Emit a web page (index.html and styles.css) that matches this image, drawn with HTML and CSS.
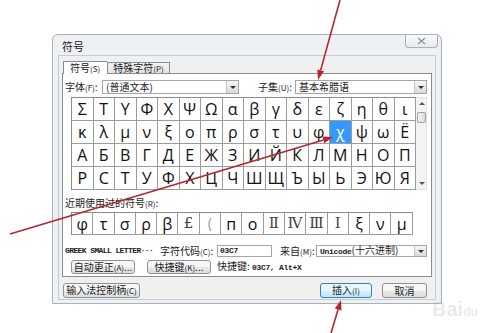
FILE: index.html
```html
<!DOCTYPE html>
<html lang="zh-CN">
<head>
<meta charset="UTF-8" />
<meta name="viewport" content="width=device-width, initial-scale=1" />
<title>符号</title>
<link rel="stylesheet" href="styles.css">
</head>
<body>
  <div class="dialog">
    <div class="titlebar">
      <span class="title">符号</span>
      <span class="close">
        <svg width="9" height="8" viewBox="0 0 9 8"><path d="M1 1 L8 7 M8 1 L1 7" stroke="#8a929a" stroke-width="1.3" fill="none"/></svg>
      </span>
    </div>

    <div class="client">
      <div class="tabs">
        <div class="tab active">符号<span class="key">(S)</span></div>
        <div class="tab">特殊字符<span class="key">(P)</span></div>
      </div>

      <div class="panel">
        <div class="font-row">
          <label class="lbl-font">字体<span class="key">(F)</span>:</label>
          <div class="select sel-font"><span>(普通文本)</span><i class="drop"></i></div>
          <label class="lbl-subset">子集<span class="key">(U)</span>:</label>
          <div class="select sel-subset"><span>基本希腊语</span><i class="drop"></i></div>
        </div>

        <div class="chars">
          <div class="grid">
            <div>Σ</div><div>Τ</div><div>Υ</div><div>Φ</div><div>Χ</div><div>Ψ</div><div>Ω</div><div>α</div>
            <div>β</div><div>γ</div><div>δ</div><div>ε</div><div>ζ</div><div>η</div><div>θ</div><div>ι</div>
            <div>κ</div><div>λ</div><div>μ</div><div>ν</div><div>ξ</div><div>ο</div><div>π</div><div>ρ</div>
            <div>σ</div><div>τ</div><div>υ</div><div>φ</div><div class="sel">χ</div><div>ψ</div><div>ω</div><div>Ё</div>
            <div>А</div><div>Б</div><div>В</div><div>Г</div><div>Д</div><div>Е</div><div>Ж</div><div>З</div>
            <div>И</div><div>Й</div><div>К</div><div>Л</div><div>М</div><div>Н</div><div>О</div><div>П</div>
            <div>Р</div><div>С</div><div>Т</div><div>У</div><div>Ф</div><div>Х</div><div>Ц</div><div>Ч</div>
            <div>Ш</div><div>Щ</div><div>Ъ</div><div>Ы</div><div>Ь</div><div>Э</div><div>Ю</div><div>Я</div>
          </div>
          <div class="scroll">
            <span class="arr up"></span>
            <span class="thumb"></span>
            <span class="arr down"></span>
          </div>
        </div>

        <div class="recent-label">近期使用过的符号<span class="key">(R)</span>:</div>
        <div class="grid recent">
          <div>φ</div><div>τ</div><div>σ</div><div>ρ</div><div>β</div><div class="serif">£</div><div class="thin">(</div><div>п</div>
          <div>o</div><div class="serif">Ⅱ</div><div class="serif">Ⅳ</div><div class="serif">Ⅲ</div><div class="serif">Ⅰ</div><div>ξ</div><div>ν</div><div>μ</div>
        </div>

        <div class="info-row">
          <span class="charname">GREEK SMALL LETTER···</span>
          <label class="lbl-code">字符代码<span class="key">(C)</span>:</label>
          <div class="input"><span class="mono">03C7</span></div>
          <label class="lbl-from">来自<span class="key">(M)</span>:</label>
          <div class="select sel-from"><span><span class="mono">Unicode</span>(十六进制)</span><i class="drop"></i></div>
        </div>

        <div class="btn-row">
          <button class="btn b-auto">自动更正<span class="key">(A)</span>...</button>
          <button class="btn b-keys">快捷键<span class="key">(K)</span>...</button>
          <span class="shortcut">快捷键: <span class="mono">03C7, Alt+X</span></span>
        </div>
      </div>

      <div class="footer">
        <button class="btn b-ime">输入法控制柄<span class="key">(C)</span></button>
        <button class="btn b-insert">插入<span class="key">(I)</span></button>
        <button class="btn b-cancel">取消</button>
      </div>
    </div>
  </div>

  <div class="watermark">Bai<span>du</span></div>

  <svg class="arrows" width="500" height="333" viewBox="0 0 500 333">
    <g stroke="#b5262f" stroke-width="1.6" fill="none">
      <line x1="340" y1="0" x2="320.6" y2="70.4"/>
      <line x1="10" y1="234" x2="323.4" y2="139.9"/>
      <line x1="331" y1="333" x2="338.1" y2="309.6"/>
    </g>
    <g fill="#b5262f">
      <polygon points="318,80 324,71.3 317.3,69.4"/>
      <polygon points="333,137 324.4,143.3 322.4,136.5"/>
      <polygon points="341,300 341.5,310.6 334.8,308.6"/>
    </g>
  </svg>
</body>
</html>
```

FILE: styles.css
```css
* {
  margin: 0; padding: 0; box-sizing: border-box;
}
body {
  width: 500px;
  height: 333px;
  overflow: hidden;
  position: relative;
  background: #fff;
  font-family: "Noto Sans CJK SC", sans-serif;
  font-size: 10px;
  line-height: 12px;
  color: #222;
}
label,
.shortcut,
.recent-label {
  white-space: nowrap;
  flex-shrink: 0;
}
.key {
  font-size: 8px;
}
.mono {
  font-family: "Liberation Mono", monospace;
  font-size: 8px;
  font-weight: bold;
  letter-spacing: -0.3px;
}
/* окно */
.dialog {
  margin: 34px 0 0 52px;
  width: 390px;
  height: 270px;
  border: 1px solid #a9b0b8;
  border-radius: 6px 6px 0 0;
  background: #eef1f4;
  padding: 0 5px 3px;
  display: flex;
  flex-direction: column;
}
.titlebar {
  height: 20px;
  display: flex;
  justify-content: space-between;
}
.title {
  padding: 5px 0 0 4px;
  font-size: 11px;
}
.close {
  width: 33px;
  height: 13px;
  border: 1px solid #a9b0b8;
  border-top: none;
  border-radius: 0 0 4px 4px;
  background: linear-gradient(#fbfbfc, #e6e9ed);
  display: flex;
  align-items: center;
  justify-content: center;
  margin-right: -2px;
}
.client {
  flex: 1;
  background: #f0f0f0;
  border: 1px solid #c5cbd2;
  padding: 5px 3px 1px;
  display: flex;
  flex-direction: column;
}
/* вкладки */
.tabs {
  display: flex;
  height: 12px;
  padding-left: 1px;
  align-items: flex-end;
}
.tab {
  height: 11px;
  padding: 0 5px;
  border: 1px solid #898c95;
  border-bottom: none;
  background: linear-gradient(#f4f4f4, #e2e2e2);
  font-size: 10px;
  line-height: 10px;
  white-space: nowrap;
}
.tab.active {
  height: 13px;
  margin-bottom: -1px;
  background: #fff;
  position: relative;
  z-index: 1;
  padding: 1px 7px 0 6px;
  border-right: none;
}
.panel {
  height: 204px;
  border: 1px solid #898c95;
  background: #fff;
  padding: 6px 4px 3px 2px;
}
.font-row,
.info-row,
.btn-row {
  display: flex;
  align-items: center;
}
.font-row {
  height: 14px;
}
.lbl-font { width: 37px; }
.lbl-subset { width: 37px; margin-left: 19px; }
.select {
  height: 14px;
  border: 1px solid #a5a5a5;
  background: #fff;
  display: flex;
  align-items: center;
  padding-left: 3px;
  white-space: nowrap;
}
.select span { flex: 1; }
.drop {
  width: 12px;
  height: 12px;
  border-left: 1px solid #c4c4c4;
  background: linear-gradient(#f6f6f6, #dadada);
  position: relative;
}
.drop::after {
  content: "";
  position: absolute;
  left: 3px; top: 5px;
  border: 3px solid transparent;
  border-top: 3px solid #333;
  border-bottom: none;
}
.sel-font { width: 137px; }
.sel-subset { width: 132px; }
/* таблица символов */
.chars {
  display: flex;
  margin: 3px 0 0 6px;
}
.grid {
  display: grid;
  grid-template-columns: repeat(16, 21.5px);
  border-top: 1px solid #8c8c8c;
  border-left: 1px solid #8c8c8c;
}
.grid div {
  height: 23px;
  border-right: 1px solid #9c9c9c;
  border-bottom: 1px solid #9c9c9c;
  display: flex;
  align-items: center;
  justify-content: center;
  font-family: "Open Sans", "DejaVu Sans", sans-serif;
  font-size: 16px;
  line-height: 1;
  color: #111;
}
.grid div.sel {
  background: #3399ff;
  color: #fff;
}
.scroll {
  width: 12px;
  height: 93px;
  background: #f3f3f3;
  border: 1px solid #e2e2e2;
  border-left: none;
  position: relative;
}
.arr {
  position: absolute;
  left: 3px;
  border: 3px solid transparent;
}
.arr.up { top: 4px; border-bottom: 3px solid #555; border-top: none; }
.arr.down { bottom: 4px; border-top: 3px solid #555; border-bottom: none; }
.thumb {
  position: absolute;
  left: 1px; top: 14px;
  width: 9px; height: 11px;
  border: 1px solid #a0a0a0;
  border-radius: 2px;
  background: linear-gradient(90deg, #f4f4f4, #dcdcdc);
}
.recent-label {
  margin-top: 7px;
  height: 12px;
}
.recent {
  margin: 3px 0 0 6px;
  grid-template-columns: repeat(16, 21.3px);
  width: max-content;
}
.recent div {
  height: 22px;
}
.recent div.serif {
  font-family: "DejaVu Serif", "Liberation Serif", serif;
  font-size: 15px;
  color: #444;
}
.recent div.thin {
  font-weight: 300;
  color: #555;
  font-size: 14px;
}
/* код символа */
.info-row {
  margin-top: 10px;
  height: 12px;
}
.charname {
  width: 95px;
  flex-shrink: 0;
  font-family: "Liberation Mono", monospace;
  font-size: 8px;
  font-weight: bold;
  letter-spacing: -0.6px;
  white-space: nowrap;
}
.lbl-code { width: 57px; }
.input {
  width: 55px;
  height: 12px;
  border: 1px solid #a5a5a5;
  padding-left: 2px;
  display: flex;
  align-items: center;
}
.lbl-from { width: 36px; margin-left: 8px; }
.sel-from { width: 111px; height: 12px; }
.sel-from .drop { height: 10px; }
.sel-from .drop::after { top: 4px; }
.btn-row {
  margin-top: 3px;
  height: 14px;
}
.btn {
  height: 14px;
  border: 1px solid #8f9193;
  border-radius: 3px;
  background: linear-gradient(#f6f6f6 50%, #e8e8e8 50%, #dedede);
  font-family: inherit;
  font-size: 10px;
  line-height: 12px;
  color: #222;
  white-space: nowrap;
}
.b-auto { width: 64px; margin-left: 6px; }
.b-keys { width: 64px; margin-left: 12px; }
.shortcut { margin-left: 6px; }
/* нижние кнопки */
.footer {
  display: flex;
  height: 15px;
  margin-top: 6px;
  padding-right: 5px;
}
.footer .btn { height: 15px; }
.b-ime { width: 77px; margin-left: 1px; }
.b-insert {
  width: 52px;
  margin-left: auto;
  border-color: #3c7fb1;
  background: linear-gradient(#eaf6fd 50%, #d9f0fc 50%, #bee6fd);
}
.b-cancel { width: 45px; margin-left: 10px; }
.watermark {
  position: absolute;
  left: 432px; top: 303px;
  font-family: "Liberation Sans", sans-serif;
  font-size: 20px;
  font-weight: bold;
  color: rgba(170,170,170,0.25);
}
.watermark span {
  font-size: 12px;
}
.arrows {
  position: absolute;
  top: 0; left: 0;
  pointer-events: none;
}
```
